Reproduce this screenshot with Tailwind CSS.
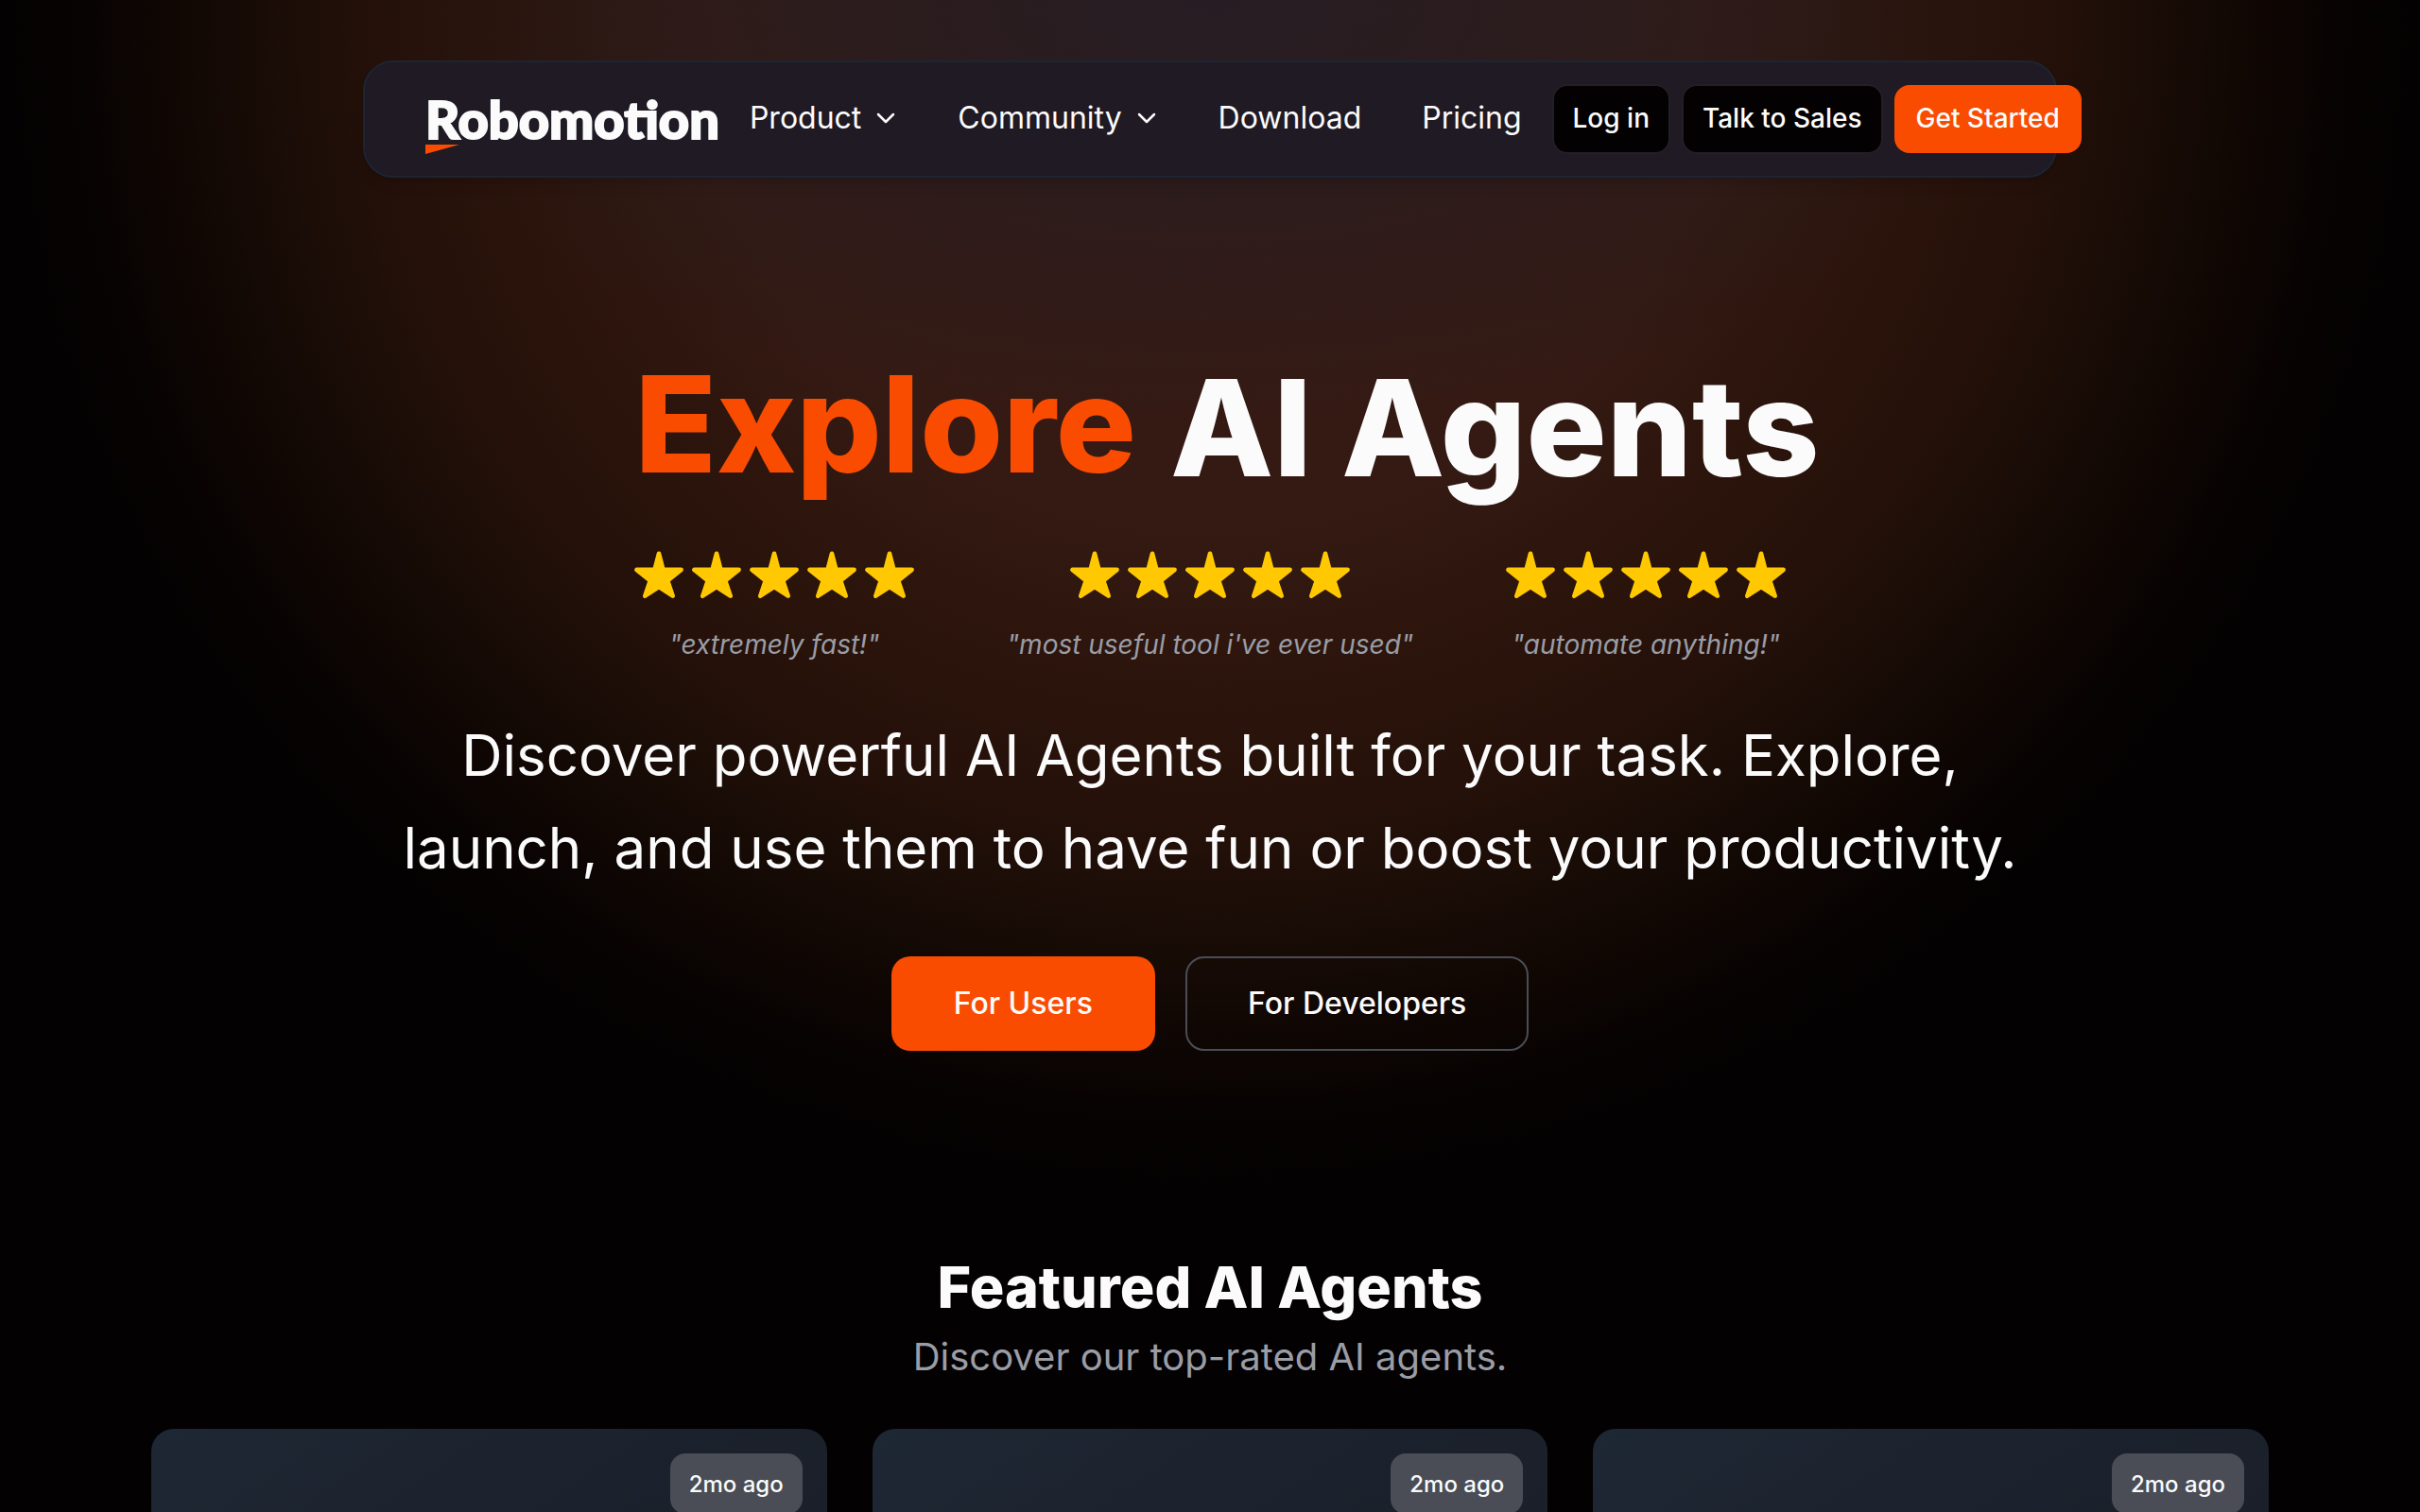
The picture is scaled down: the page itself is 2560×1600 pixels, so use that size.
<!DOCTYPE html>
<html lang="en">
<head>
    <meta charset="UTF-8">
    <meta name="viewport" content="width=device-width, initial-scale=1.0">
    <title>Robomotion - AI Agents</title>
    <script src="https://cdn.jsdelivr.net/npm/@tailwindcss/browser@4"></script>
</head>
<body class="bg-[#030102] text-[#fbfbfc] font-['Inter',sans-serif] h-screen overflow-hidden">
    <!-- Icons -->
    <svg class="hidden">
        <symbol id="star" viewBox="0 0 24 24">
            <path d="M12 2.500L13.900 9.800H22.100L15.950 14.800L18.300 21.700L12 17.600L5.700 21.700L8.050 14.800L1.900 9.800H10.100z" fill="currentColor" stroke="currentColor" stroke-width="2" stroke-linejoin="round"/>
        </symbol>
        <symbol id="chevron" viewBox="0 0 24 24">
            <path d="M4 8l8 8 8-8" fill="none" stroke="currentColor" stroke-width="2.500" stroke-linecap="round" stroke-linejoin="round"/>
        </symbol>
    </svg>

    <div class="min-h-screen bg-[radial-gradient(ellipse_900px_440px_at_50%_0px,rgba(22,32,50,0.5),transparent),radial-gradient(ellipse_1300px_1260px_at_50%_20px,#361a15_0%,#341a13_42%,#2b140b_57%,#25110a_67%,#190c06_77%,#0e0603_86%,#060202_93%,#030102_100%)]">
        <header class="pt-16">
            <nav class="mx-auto flex h-[124px] w-[70%] items-center rounded-[32px] border-2 border-[#1c2533] bg-[#1f1a23] pl-16 shadow-lg">
                <a href="#" class="relative mr-8 shrink-0 font-['Lato'] text-[56px] leading-[54px] font-black [-webkit-text-stroke:2px_#fbfbfc]">
                    Robomotion
                    <svg class="absolute left-0 top-full h-[10px] w-9" viewBox="0 0 36 10"><path d="M0 0h36L0 10z" fill="#f94c00"/></svg>
                </a>
                <div class="flex shrink-0 items-center gap-16 pb-[2px] text-[32px] leading-10">
                    <button class="flex items-center gap-3.5">Product <svg class="size-6"><use href="#chevron"/></svg></button>
                    <button class="flex items-center gap-3.5">Community <svg class="size-6"><use href="#chevron"/></svg></button>
                    <a href="#">Download</a>
                    <a href="#">Pricing</a>
                </div>
                <div class="ml-8 flex shrink-0 items-center gap-3 text-[28px] leading-10 font-medium">
                    <a href="#" class="rounded-2xl border-2 border-[#231f26] bg-[#030102] px-5 pt-[14px] pb-4">Log in</a>
                    <a href="#" class="rounded-2xl border-2 border-[#231f26] bg-[#030102] px-5 pt-[14px] pb-4">Talk to Sales</a>
                    <a href="#" class="rounded-2xl bg-[#f94c00] px-[23px] pt-[15px] pb-[17px]">Get Started</a>
                </div>
            </nav>
        </header>

        <main>
            <section class="flex flex-col items-center pt-[176px]">
                <h1 class="flex gap-9 pl-9 text-[142px] leading-[176px] font-extrabold">
                    <span class="-mt-1 text-[#f94c00]">Explore</span>
                    <span>AI Agents</span>
                </h1>

                <div class="mt-10 grid grid-cols-3 gap-4 text-center">
                    <figure class="w-[445px]">
                        <div class="flex justify-center gap-[5px] text-[#ffc800]">
                            <svg class="size-14"><use href="#star"/></svg>
                            <svg class="size-14"><use href="#star"/></svg>
                            <svg class="size-14"><use href="#star"/></svg>
                            <svg class="size-14"><use href="#star"/></svg>
                            <svg class="size-14"><use href="#star"/></svg>
                        </div>
                        <figcaption class="mt-6 text-[28px] leading-11 italic text-[#9a9da6]">"extremely fast!"</figcaption>
                    </figure>
                    <figure class="w-[445px]">
                        <div class="flex justify-center gap-[5px] text-[#ffc800]">
                            <svg class="size-14"><use href="#star"/></svg>
                            <svg class="size-14"><use href="#star"/></svg>
                            <svg class="size-14"><use href="#star"/></svg>
                            <svg class="size-14"><use href="#star"/></svg>
                            <svg class="size-14"><use href="#star"/></svg>
                        </div>
                        <figcaption class="mt-6 text-[28px] leading-11 italic text-[#9a9da6]">"most useful tool i've ever used"</figcaption>
                    </figure>
                    <figure class="w-[445px]">
                        <div class="flex justify-center gap-[5px] text-[#ffc800]">
                            <svg class="size-14"><use href="#star"/></svg>
                            <svg class="size-14"><use href="#star"/></svg>
                            <svg class="size-14"><use href="#star"/></svg>
                            <svg class="size-14"><use href="#star"/></svg>
                            <svg class="size-14"><use href="#star"/></svg>
                        </div>
                        <figcaption class="mt-6 text-[28px] leading-11 italic text-[#9a9da6]">"automate anything!"</figcaption>
                    </figure>
                </div>

                <p class="mt-[46px] max-w-[1792px] text-center text-[60px] leading-[98px]">Discover powerful AI Agents built for your task. Explore,<br>launch, and use them to have fun or boost your productivity.</p>

                <div class="mt-[66px] flex gap-8 text-[32px] leading-12 font-medium">
                    <button class="h-[100px] rounded-[20px] bg-[#f94c00] px-[66px]">For Users</button>
                    <button class="h-[100px] rounded-[20px] border-2 border-[#4a4d55] px-16">For Developers</button>
                </div>
            </section>

            <section class="mx-auto w-[87.5%] pt-[214px]">
                <h2 class="text-center text-[61px] leading-[72px] font-extrabold">Featured AI Agents</h2>
                <p class="mt-2 text-center text-[40px] leading-[60px] text-[#9a9da6]">Discover our top-rated AI agents.</p>
                <div class="mt-[46px] grid grid-cols-3 gap-12">
                    <article class="flex h-[480px] items-start justify-end rounded-[24px] bg-linear-to-br from-[#1e2734] to-[#181a22] p-[26px]">
                        <span class="rounded-2xl bg-[#4a4d55] px-5 pt-[17px] pb-[15px] text-2xl leading-8 font-medium">2mo ago</span>
                    </article>
                    <article class="flex h-[480px] items-start justify-end rounded-[24px] bg-linear-to-br from-[#1e2734] to-[#181a22] p-[26px]">
                        <span class="rounded-2xl bg-[#4a4d55] px-5 pt-[17px] pb-[15px] text-2xl leading-8 font-medium">2mo ago</span>
                    </article>
                    <article class="flex h-[480px] items-start justify-end rounded-[24px] bg-linear-to-br from-[#1e2734] to-[#181a22] p-[26px]">
                        <span class="rounded-2xl bg-[#4a4d55] px-5 pt-[17px] pb-[15px] text-2xl leading-8 font-medium">2mo ago</span>
                    </article>
                </div>
            </section>
        </main>
    </div>
</body>
</html>
